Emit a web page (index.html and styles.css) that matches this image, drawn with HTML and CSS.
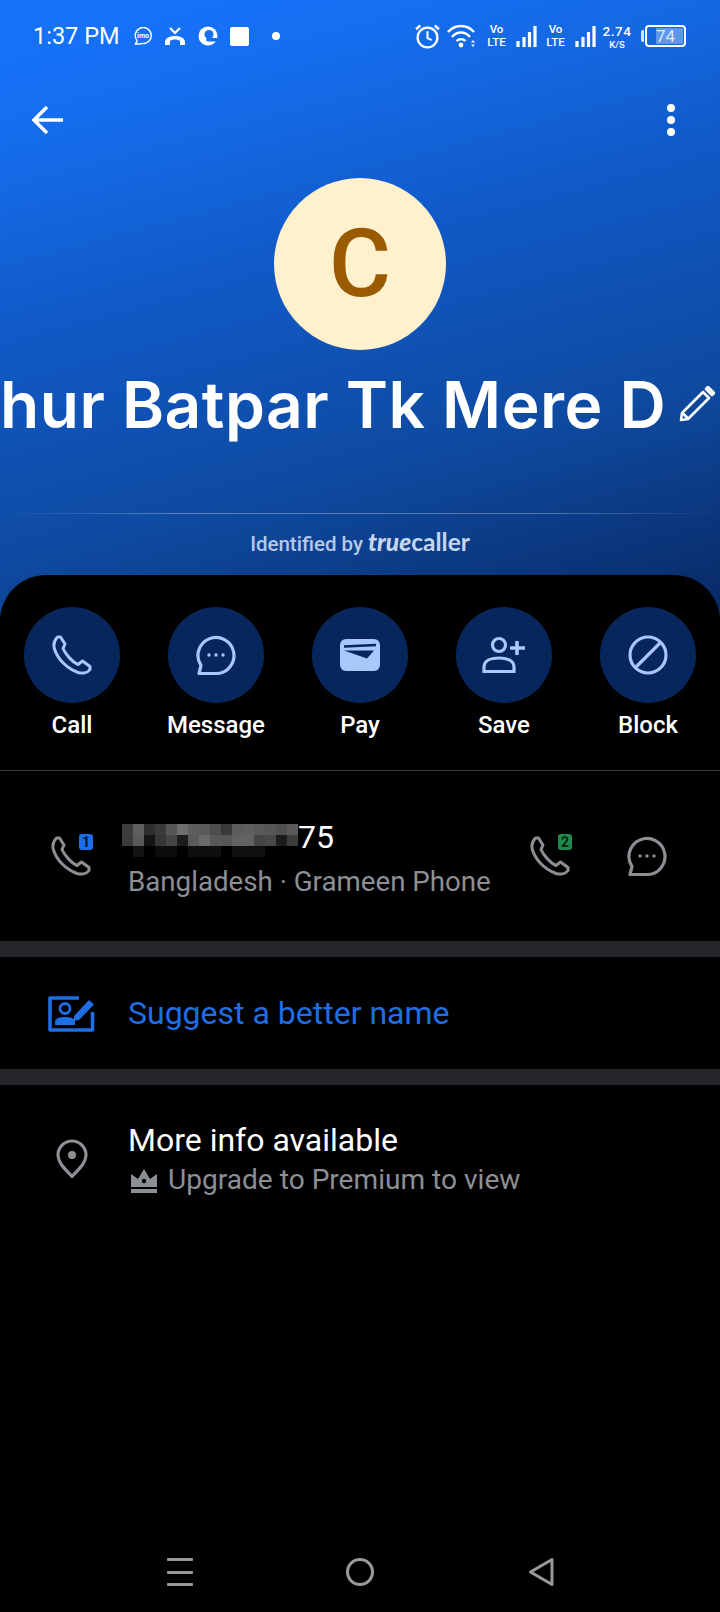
FILE: index.html
```html
<!DOCTYPE html>
<html lang="en">
<head>
    <meta charset="UTF-8">
    <meta name="viewport" content="width=device-width, initial-scale=1.0">
    <title>Caller profile</title>
    <link rel="stylesheet" href="styles.css">
</head>
<body>
    <svg class="defs" width="0" height="0">
        <symbol id="phone" viewBox="0 0 40 40">
            <path d="M5.500 2C2.500 5 1 9 2.500 14C5.500 24 15 33.500 26 37.500C30 38.500 35.500 38 38 34.500L38 31.500L30.500 26L26 29.500C20 27 13.500 19 11 13.500L13 9L8.500 2Z" fill="none" stroke="currentColor" stroke-width="3" stroke-linejoin="round"/>
        </symbol>
        <symbol id="bubble" viewBox="0 0 40 40">
            <path d="M3 38.500L5 30.500A18 18 0 1 1 20 38.500Z" fill="none" stroke="currentColor" stroke-width="3.200" stroke-linejoin="round"/>
            <circle cx="13" cy="20" r="1.700" fill="currentColor"/>
            <circle cx="20" cy="20" r="1.700" fill="currentColor"/>
            <circle cx="27" cy="20" r="1.700" fill="currentColor"/>
        </symbol>
    </svg>

    <div class="page">
        <header class="hero">
            <div class="status">
                <span class="time">1:37 PM</span>
                <svg class="st-icon imo" viewBox="0 0 18 18"><path d="M1.500 17.200L3 13.500A8 8 0 1 1 9 16.500Z" fill="none" stroke="#fff" stroke-width="1.400"/><text x="9" y="11" class="imo-text">imo</text></svg>
                <svg class="st-icon missed" viewBox="0 0 20 18"><path d="M5 1L10 6L15 1" fill="none" stroke="#fff" stroke-width="2.200"/><path d="M0 15C0 7 20 7 20 15V18H15V14C13 12 7 12 5 14V18H0Z" fill="#fff"/></svg>
                <svg class="st-icon edge" viewBox="0 0 20 20"><circle cx="10" cy="10" r="9.500" fill="#fff"/><circle cx="11" cy="8.500" r="4.500" fill="#1570f0"/><rect x="8" y="12" width="12" height="3.500" rx="1.700" fill="#1570f0"/></svg>
                <span class="st-square"></span>
                <span class="st-dot"></span>
                <span class="status-gap"></span>
                <svg class="st-icon alarm" viewBox="0 0 24 24"><circle cx="12" cy="13" r="9.500" fill="none" stroke="#fff" stroke-width="2.200"/><path d="M12 7V13.500L16 15.500" fill="none" stroke="#fff" stroke-width="2"/><path d="M1 5L5 1.500M23 5L19 1.500" stroke="#fff" stroke-width="2.400"/></svg>
                <svg class="st-icon wifi" viewBox="0 0 30 24"><path d="M1 8C8 0 20 0 27 8M5 13C10 7 18 7 23 13M9.500 17C12 14.500 16 14.500 18.500 17" fill="none" stroke="#fff" stroke-width="2.400"/><circle cx="14" cy="21" r="2.400" fill="#fff"/><path d="M26 16L28 18.500H24ZM24 20.500H28L26 23Z" fill="#fff"/></svg>
                <span class="volte"><span>Vo</span><span>LTE</span></span>
                <svg class="st-icon signal" viewBox="0 0 21 21"><path d="M2 15V21M8 11V21M13.500 6V21M19 0V21" stroke="#fff" stroke-width="3.200"/></svg>
                <span class="volte"><span>Vo</span><span>LTE</span></span>
                <svg class="st-icon signal" viewBox="0 0 21 21"><path d="M2 15V21M8 11V21M13.500 6V21M19 0V21" stroke="#fff" stroke-width="3.200"/></svg>
                <span class="speed"><span class="speed-num">2.74</span><span class="speed-unit">K/S</span></span>
                <span class="battery-tip"></span>
                <span class="battery"><span class="battery-fill"></span><span class="battery-num">74</span></span>
            </div>

            <div class="topbar">
                <svg class="back" viewBox="0 0 32 30"><path d="M31 15H3M15 2L2 15L15 28" fill="none" stroke="#fff" stroke-width="3.400"/></svg>
                <div class="kebab"><span></span><span></span><span></span></div>
            </div>

            <div class="avatar">C</div>

            <div class="name-row">
                <span class="name">hur Batpar Tk Mere D</span>
                <svg class="pencil" viewBox="0 0 36 36"><path d="M2 34L3 27L24 6L30 12L9 33ZM3.500 27L9 32.500M27 3L29 1L35 7L33 9Z" fill="none" stroke="#fff" stroke-width="2.600" stroke-linejoin="round"/></svg>
            </div>

            <div class="hero-line"></div>
            <div class="identified">
                <span>Identified by</span>
                <span class="logo"><span class="logo-true">true</span>caller</span>
            </div>
        </header>

        <main class="sheet">
            <div class="actions">
                <div class="action">
                    <span class="action-circle"><svg class="i40"><use href="#phone"/></svg></span>
                    <span class="action-label">Call</span>
                </div>
                <div class="action">
                    <span class="action-circle"><svg class="i40"><use href="#bubble"/></svg></span>
                    <span class="action-label">Message</span>
                </div>
                <div class="action">
                    <span class="action-circle">
                        <svg class="i40" viewBox="0 0 40 40"><rect x="0" y="4" width="40" height="32" rx="6" fill="currentColor"/><path d="M4 11.500L36 10" stroke="#06265c" stroke-width="2.500"/><path d="M4 15.500L34 15.500L27 23.500Z" fill="#06265c"/></svg>
                    </span>
                    <span class="action-label">Pay</span>
                </div>
                <div class="action">
                    <span class="action-circle">
                        <svg class="i44" viewBox="0 0 44 40"><circle cx="17" cy="10" r="6.500" fill="none" stroke="currentColor" stroke-width="3.200"/><path d="M2 36.500V32C2 25 10 23 17 23C24 23 32 25 32 32V36.500Z" fill="none" stroke="currentColor" stroke-width="3.200"/><path d="M35 6V20M28 13H43" stroke="currentColor" stroke-width="3.600"/></svg>
                    </span>
                    <span class="action-label">Save</span>
                </div>
                <div class="action">
                    <span class="action-circle">
                        <svg class="i40" viewBox="0 0 40 40"><circle cx="20" cy="20" r="18" fill="none" stroke="currentColor" stroke-width="3.200"/><path d="M8 32L32 8" stroke="currentColor" stroke-width="3.200"/></svg>
                    </span>
                    <span class="action-label">Block</span>
                </div>
            </div>

            <section class="number-row">
                <div class="sim-icon">
                    <svg class="i40"><use href="#phone"/></svg>
                    <span class="sim-badge sim-one">1</span>
                </div>
                <div class="number-text">
                    <div class="number-line">
                        <svg class="mosaic" width="176" height="33" viewBox="0 0 16 3" shape-rendering="crispEdges">
                            <rect x="0" y="0" width="1" height="1" fill="#3d3d3d"/><rect x="1" y="0" width="1" height="1" fill="#5e5e5e"/><rect x="2" y="0" width="1" height="1" fill="#2e2e2e"/><rect x="3" y="0" width="1" height="1" fill="#3a3a3a"/><rect x="4" y="0" width="1" height="1" fill="#565656"/><rect x="5" y="0" width="1" height="1" fill="#6e6e6e"/><rect x="6" y="0" width="1" height="1" fill="#5e5e5e"/><rect x="7" y="0" width="1" height="1" fill="#5a5a5a"/><rect x="8" y="0" width="1" height="1" fill="#4e4e4e"/><rect x="9" y="0" width="1" height="1" fill="#383838"/><rect x="10" y="0" width="1" height="1" fill="#5c5c5c"/><rect x="11" y="0" width="1" height="1" fill="#5e5e5e"/><rect x="12" y="0" width="1" height="1" fill="#5a5a5a"/><rect x="13" y="0" width="1" height="1" fill="#565656"/><rect x="14" y="0" width="1" height="1" fill="#505050"/><rect x="15" y="0" width="1" height="1" fill="#5a5a5a"/>
                            <rect x="0" y="1" width="1" height="1" fill="#3c3c3c"/><rect x="1" y="1" width="1" height="1" fill="#5a5a5a"/><rect x="2" y="1" width="1" height="1" fill="#141414"/><rect x="3" y="1" width="1" height="1" fill="#363636"/><rect x="4" y="1" width="1" height="1" fill="#454545"/><rect x="5" y="1" width="1" height="1" fill="#1c1c1c"/><rect x="6" y="1" width="1" height="1" fill="#5a5a5a"/><rect x="7" y="1" width="1" height="1" fill="#6a6a6a"/><rect x="8" y="1" width="1" height="1" fill="#585858"/><rect x="9" y="1" width="1" height="1" fill="#565656"/><rect x="10" y="1" width="1" height="1" fill="#626262"/><rect x="11" y="1" width="1" height="1" fill="#626262"/><rect x="12" y="1" width="1" height="1" fill="#444"/><rect x="13" y="1" width="1" height="1" fill="#484848"/><rect x="14" y="1" width="1" height="1" fill="#1c1c1c"/><rect x="15" y="1" width="1" height="1" fill="#3c3c3c"/>
                            <rect x="1" y="2" width="1" height="1" fill="#121212"/><rect x="3" y="2" width="2" height="1" fill="#0c0c0c"/><rect x="6" y="2" width="3" height="1" fill="#0f0f0f"/><rect x="10" y="2" width="3" height="1" fill="#101010"/>
                        </svg>
                        <span class="number-tail">75</span>
                    </div>
                    <div class="number-sub">Bangladesh · Grameen Phone</div>
                </div>
                <div class="sim-icon">
                    <svg class="i40"><use href="#phone"/></svg>
                    <span class="sim-badge sim-green">2</span>
                </div>
                <svg class="i40 row-msg"><use href="#bubble"/></svg>
            </section>

            <div class="band"></div>

            <section class="suggest-row">
                <svg class="suggest-icon" viewBox="0 0 47 38">
                    <path d="M31 4H2V36H44.500V18" fill="none" stroke="currentColor" stroke-width="3.600" stroke-linejoin="round"/>
                    <circle cx="17" cy="14.500" r="5" fill="none" stroke="currentColor" stroke-width="2.800"/>
                    <path d="M7 31V28C7 24 12 23 17 23C22 23 27 24 27 28V31Z" fill="currentColor"/>
                    <path d="M26 22L41 6L46 10.500L31 26L25.500 27Z" fill="currentColor"/>
                </svg>
                <span class="suggest-text">Suggest a better name</span>
            </section>

            <div class="band"></div>

            <section class="info-row">
                <svg class="pin" viewBox="0 0 32 40"><path d="M16 37.500C9 30 2 24 2 16A14 14 0 0 1 30 16C30 24 23 30 16 37.500Z" fill="none" stroke="currentColor" stroke-width="3.200" stroke-linejoin="round"/><circle cx="16" cy="16" r="4" fill="currentColor"/></svg>
                <div>
                    <div class="info-title">More info available</div>
                    <div class="info-sub">
                        <svg class="crown" viewBox="0 0 26 26"><path d="M0 7L7 12L13 2L19 12L26 7V20H0Z" fill="currentColor"/><circle cx="13" cy="14" r="2.200" fill="#000"/><rect x="0" y="22" width="26" height="4" fill="currentColor"/></svg>
                        <span>Upgrade to Premium to view</span>
                    </div>
                </div>
            </section>
        </main>

        <nav class="navbar">
            <div class="nav-menu"><span></span><span></span><span></span></div>
            <span class="nav-home"></span>
            <svg class="nav-back" viewBox="0 0 26 30"><path d="M24 2.500V27.500L2.500 15Z" fill="none" stroke="#999" stroke-width="3" stroke-linejoin="round"/></svg>
        </nav>
    </div>
</body>
</html>
```

FILE: styles.css
```css
html, body {
    margin: 0;
    padding: 0;
    background: #000;
}
.defs {
    position: absolute;
}
.page {
    position: relative;
    width: 720px;
    height: 1612px;
    overflow: hidden;
    display: flex;
    flex-direction: column;
    font-family: Roboto, sans-serif;
    color: #fff;
}

/* blue header */
.hero {
    height: 636px;
    flex-shrink: 0;
    box-sizing: border-box;
    background: linear-gradient(165deg, #1672f8 0%, #1570f4 12%, #1468e2 24%, #1059c6 41%, #0e4aa0 69%, #092a66 96%);
}
.status {
    display: flex;
    align-items: center;
    height: 26px;
    padding: 23px 34px 0 33px;
}
.time {
    font-size: 23.500px;
    width: 101px;
    white-space: nowrap;
}
.st-icon {
    flex-shrink: 0;
}
.imo {
    width: 18px;
    height: 18px;
}
.imo-text {
    font-size: 7px;
    font-weight: 700;
    fill: #fff;
    text-anchor: middle;
}
.missed {
    width: 20px;
    height: 18px;
    margin-left: 13px;
}
.edge {
    width: 20px;
    height: 20px;
    margin-left: 13px;
}
.st-square {
    width: 19px;
    height: 19px;
    background: #fff;
    border-radius: 2px;
    margin-left: 12px;
}
.st-dot {
    width: 8px;
    height: 8px;
    background: #fff;
    border-radius: 50%;
    margin-left: 23px;
}
.status-gap {
    flex: 1;
}
.alarm {
    width: 25px;
    height: 25px;
}
.wifi {
    width: 30px;
    height: 24px;
    margin-left: 7px;
}
.volte {
    display: flex;
    flex-direction: column;
    align-items: center;
    width: 21px;
    margin-left: 9px;
    font-size: 11.500px;
    font-weight: 500;
    line-height: 13.500px;
}
.signal {
    width: 21px;
    height: 21px;
    margin-left: 9px;
}
.signal + .volte {
    margin-left: 8px;
}
.speed {
    display: flex;
    flex-direction: column;
    align-items: center;
    width: 28px;
    margin-left: 7px;
    font-weight: 500;
}
.speed-num {
    font-size: 13.500px;
    letter-spacing: 0.5px;
    line-height: 16px;
}
.speed-unit {
    font-size: 9.500px;
    line-height: 11px;
}
.battery-tip {
    width: 3px;
    height: 12px;
    background: #cfe0fb;
    border-radius: 2px 0 0 2px;
    margin-left: 10px;
    margin-right: 1px;
}
.battery {
    position: relative;
    box-sizing: border-box;
    width: 41px;
    height: 22px;
    border: 2px solid #fff;
    border-radius: 4px;
    display: flex;
    align-items: center;
    justify-content: center;
}
.battery-fill {
    position: absolute;
    top: 1px;
    bottom: 1px;
    right: 1px;
    width: 72%;
    background: rgba(255, 255, 255, 0.32);
}
.battery-num {
    position: relative;
    font-size: 17px;
    color: #dfeaff;
}
.topbar {
    display: flex;
    justify-content: space-between;
    align-items: center;
    padding: 0 45px 0 32px;
    margin-top: 55px;
    height: 32px;
}
.back {
    width: 32px;
    height: 30px;
}
.kebab {
    display: flex;
    flex-direction: column;
    gap: 4px;
}
.kebab span {
    width: 8px;
    height: 8px;
    background: #fff;
    border-radius: 50%;
}
.avatar {
    width: 172px;
    height: 172px;
    margin: 42px auto 0;
    border-radius: 50%;
    background: #fff1cd;
    color: #9a5b00;
    font-size: 95px;
    font-weight: 500;
    line-height: 172px;
    text-align: center;
}
.name-row {
    display: flex;
    align-items: center;
    height: 76px;
    margin-top: 16px;
    white-space: nowrap;
    overflow: hidden;
}
.name {
    font-family: Inter, sans-serif;
    font-size: 64px;
    font-weight: 600;
    letter-spacing: 0.5px;
}
.pencil {
    width: 36px;
    height: 36px;
    margin-left: 13px;
    flex-shrink: 0;
}
.hero-line {
    height: 1px;
    margin-top: 71px;
    background: linear-gradient(90deg, rgba(255,255,255,0) 0%, rgba(255,255,255,0.3) 25%, rgba(255,255,255,0.3) 75%, rgba(255,255,255,0) 100%);
}
.identified {
    display: flex;
    justify-content: center;
    align-items: baseline;
    gap: 5px;
    margin-top: 13px;
    font-size: 20.500px;
    font-weight: 500;
    color: #b4c8ea;
}
.logo {
    font-family: Lato, sans-serif;
    font-size: 24.500px;
    font-weight: 700;
    color: #c6d6f0;
}
.logo-true {
    font-style: italic;
    font-weight: 900;
}

/* black sheet */
.sheet {
    flex: 1;
    margin-top: -61px;
    background: #000;
    border-radius: 46px 46px 0 0;
    position: relative;
}
.actions {
    display: grid;
    grid-template-columns: repeat(5, 144px);
    padding: 32px 0 29px;
    border-bottom: 1px solid #38393c;
}
.action {
    display: flex;
    flex-direction: column;
    align-items: center;
}
.action-circle {
    display: flex;
    align-items: center;
    justify-content: center;
    width: 96px;
    height: 96px;
    border-radius: 50%;
    background: #06265c;
    color: #a8c7fa;
}
.i40 {
    width: 40px;
    height: 40px;
    display: block;
}
.i44 {
    width: 44px;
    height: 40px;
    display: block;
}
.action-label {
    margin-top: 6px;
    font-size: 24px;
    font-weight: 500;
    line-height: 32px;
}
.number-row {
    display: flex;
    align-items: center;
    height: 170px;
    padding-left: 51px;
    color: #8c8f94;
}
.sim-icon {
    position: relative;
    width: 40px;
    height: 40px;
}
.sim-badge {
    position: absolute;
    right: -2px;
    top: -2px;
    width: 14px;
    height: 16px;
    border-radius: 3px;
    font-size: 14px;
    font-weight: 700;
    line-height: 16px;
    text-align: center;
    color: #04142e;
}
.sim-one {
    background: #1a6fe8;
}
.sim-green {
    background: #1f8a4d;
    color: #062412;
}
.number-text {
    width: 408px;
    margin-left: 31px;
    margin-top: 6px;
}
.number-line {
    display: flex;
    align-items: flex-start;
    height: 46px;
}
.mosaic {
    flex-shrink: 0;
    margin-top: 7px;
}
.number-tail {
    font-size: 32px;
    line-height: 40px;
    color: #fff;
}
.number-sub {
    margin-left: 6px;
    font-size: 27.700px;
    line-height: 38px;
    white-space: nowrap;
}
.row-msg {
    margin-left: 57px;
}
.band {
    height: 16px;
    background: #25262a;
}
.suggest-row {
    display: flex;
    align-items: center;
    height: 112px;
    padding-left: 48px;
    color: #1f6ee6;
}
.suggest-icon {
    width: 47px;
    height: 38px;
}
.suggest-text {
    margin-left: 33px;
    font-size: 32px;
}
.info-row {
    display: flex;
    align-items: center;
    padding: 34px 0 0 56px;
}
.pin {
    width: 32px;
    height: 40px;
    color: #8c8f94;
}
.info-title {
    margin-left: 40px;
    font-size: 32px;
    line-height: 42px;
}
.info-sub {
    display: flex;
    align-items: center;
    margin-left: 43px;
    margin-top: 1px;
    font-size: 28.100px;
    line-height: 36px;
    color: #8c8f94;
}
.crown {
    width: 26px;
    height: 26px;
    margin-right: 11px;
}

/* android nav buttons */
.navbar {
    position: absolute;
    left: 0;
    right: 0;
    top: 1556px;
    height: 32px;
    display: flex;
    align-items: center;
}
.nav-menu {
    display: flex;
    flex-direction: column;
    gap: 9.500px;
    margin-left: 167px;
}
.nav-menu span {
    width: 26px;
    height: 3px;
    background: #999;
    border-radius: 1px;
}
.nav-home {
    box-sizing: border-box;
    width: 28px;
    height: 28px;
    margin-left: 153px;
    border: 3px solid #999;
    border-radius: 50%;
}
.nav-back {
    width: 26px;
    height: 30px;
    margin-left: 154px;
}
```
